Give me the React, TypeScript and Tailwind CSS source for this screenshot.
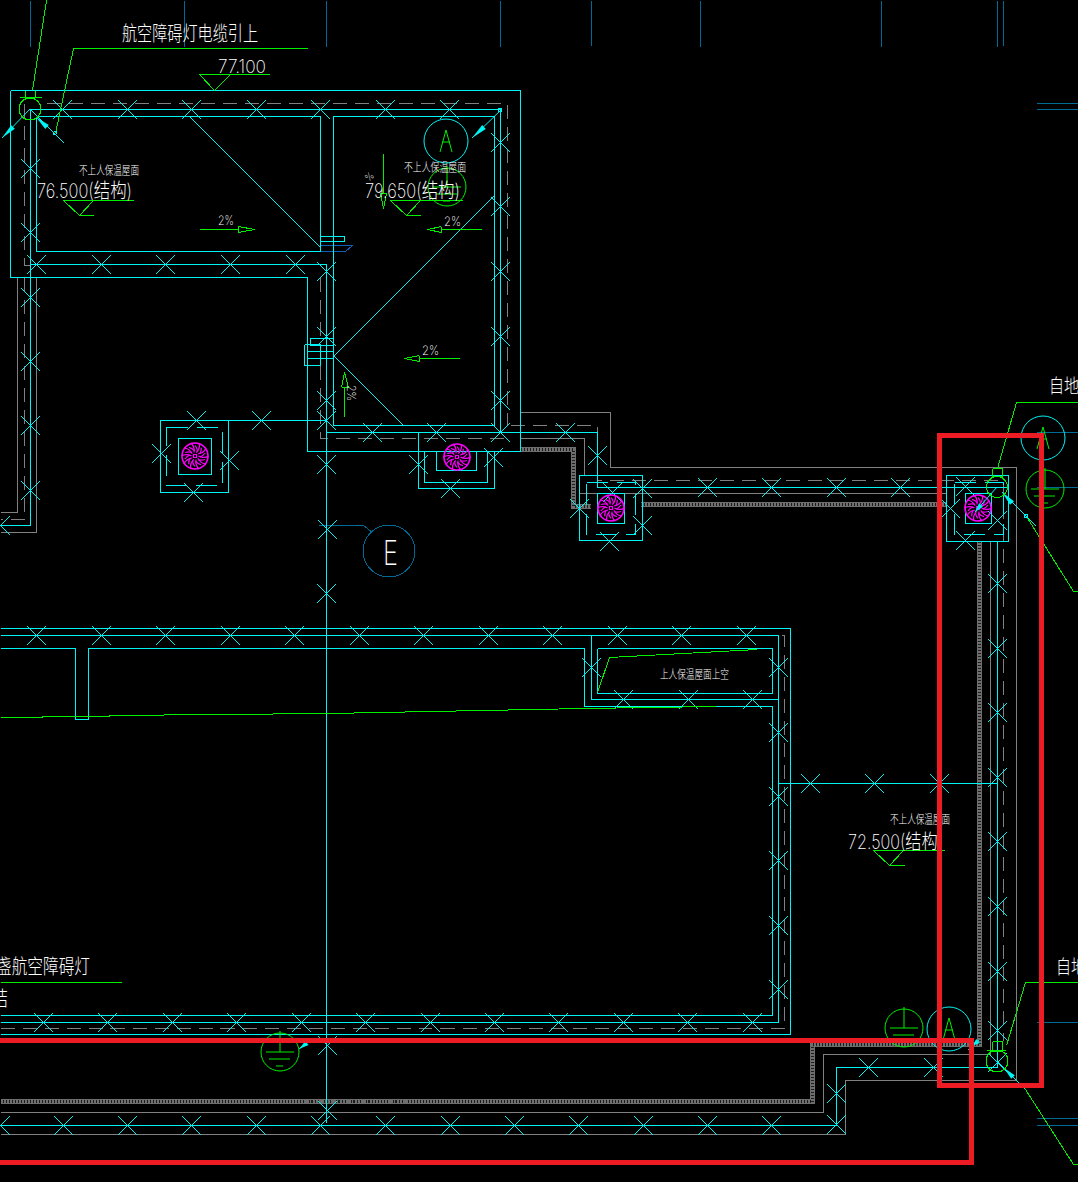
import React from 'react';

const CYAN = '#00f4f4';
const GRAY = '#808080';
const GREEN = '#00f000';
const BLUE = '#006a96';
const MAGENTA = '#ff00ff';

const crossesAt = [
  // top parapet
  [62, 109], [127, 109], [191, 109], [256, 109], [320, 109], [385, 109], [449, 109],
  // left wall
  [30, 168], [30, 232], [30, 297], [30, 361], [30, 425], [30, 490], [0, 525],
  // lower parapet of the left room
  [36, 264], [101, 264], [165, 264], [230, 264], [295, 264], [326, 271],
  // right wall of the upper room
  [500, 142], [500, 206], [500, 271], [500, 336], [500, 400], [500, 432],
  // axis
  [326, 336], [326, 400], [326, 420], [326, 464], [327, 529], [326, 593],
  [372, 432], [436, 432], [565, 432], [597, 455],
  // fans
  [196, 420], [261, 420], [161, 453], [229, 460], [193, 492],
  [418, 464], [493, 457], [450, 488],
  [579, 508], [642, 525], [642, 488], [609, 541], [612, 492],
  [965, 486], [950, 508], [997, 520], [965, 540],
  // run towards the right fan
  [707, 487], [771, 487], [836, 487], [900, 487],
  // right wall
  [997, 583], [997, 648], [997, 712], [997, 777], [997, 841], [997, 906], [997, 971], [997, 1030], [997, 1062],
  // top of the lower roof
  [36, 635], [101, 635], [165, 635], [230, 635], [294, 635], [359, 635], [423, 635], [488, 635], [552, 635], [617, 635], [681, 635], [746, 635],
  [591, 667], [623, 699], [688, 699], [752, 699],
  [778, 667], [778, 732], [778, 796], [778, 860], [778, 925], [778, 989],
  // bottom of the lower roof
  [43, 1022], [107, 1022], [172, 1022], [236, 1022], [301, 1022], [365, 1022], [430, 1022], [494, 1022], [558, 1022], [623, 1022], [687, 1022], [752, 1022],
  [327, 1045], [327, 1110],
  // outer bottom run
  [0, 1125], [63, 1125], [127, 1125], [191, 1125], [256, 1125], [320, 1125], [385, 1125], [450, 1125], [514, 1125], [578, 1125], [643, 1125], [707, 1125], [771, 1125],
  [836, 1124], [836, 1093], [868, 1067], [933, 1067],
  // section line
  [810, 783], [874, 783], [939, 783],
];

const cyanLines = [
  '10,90 520,90 520,451 307,451 307,277 10,277 10,90',
  '30,525 30,109 500,109 500,432',
  '36,116 320,116 320,251 36,251 36,116',
  '333,425 333,116 494,116 494,425 333,425',
  '30,264 326,264 326,1122',
  '0,525 30,525',
  '228,420 326,420',
  '326,432 597,432 597,487 1008,487',
  '0,628 790,628 790,1034 0,1034',
  '0,635 778,635 778,1022 0,1022',
  '0,648 75,648 75,719 88,719 88,648 584,648 584,706 772,706 772,1015 0,1015',
  '591,635 591,699 778,699',
  '597,648 772,648 772,693 597,693 597,648',
  '778,783 997,783',
  '0,1125 836,1125 836,1067 997,1067',
  '997,541 997,1067',
  '320,236 344,236 344,241 320,241',
  '304,344 320,344 320,365 304,365 304,344',
  '310,345 310,338 333,338',
  '310,345 333,345',
  '307,351 333,351',
  '307,358 333,358',
  // diagonals
  '189,116 320,247',
  '333,356 494,195',
  '334,356 403,425',
];

const grayLines = [
  '17,277 17,512 0,512',
  '36,277 36,532 0,532',
  '520,412 610,412 610,467 1016,467 1016,1080 845,1080 845,1134 0,1134',
  '520,438 584,438 584,475',
  '642,493 946,493',
  '990,541 990,1054 823,1054 823,1112 0,1112',
  '579,493 642,493',
];

const dashedLines = [
  '46,103 507,103 507,425',
  '24,103 24,265 30,265',
  '24,277 24,519 0,519',
  '320,277 320,438 510,438',
  '510,425 597,425 597,480 1003,480 1003,1040',
  '0,1028 784,1028 784,635 772,635',
];

const hatchLines = [
  '520,449 573,449 573,506 590,506',
  '640,504 946,504',
  '979,541 979,1044 812,1044 812,1101 0,1101',
];

const greenLines = [
  '46,0 32,90',
  '307,48 73,48 55,133',
  '19,97 41,97',
  '25,90 25,97',
  '35,90 35,97',
  // levels
  '269,74 199,74 214,90 230,74',
  '133,200 63,200 79,215 93,215',
  '79,215 93,200',
  '462,200 390,200 406,215 420,215',
  '406,215 420,200',
  '944,850 873,850 889,865 904,865',
  '889,865 903,850',
  // slope arrows
  '199,229 238,229',
  '238,226 254,229 238,232 238,226',
  '441,229 481,229',
  '441,226 427,229 441,232 441,226',
  '419,358 459,358',
  '419,355 404,358 419,361 419,355',
  '344,416 344,387',
  '341,387 344,372 348,387 341,387',
  '383,153 383,193',
  '380,193 383,208 386,193 380,193',
  // leaders
  '1078,402 1016,402 997,468',
  '1026,516 1073,591 1078,591',
  '1078,982 1025,982 1006,1045',
  '1025,1089 1073,1164 1078,1164',
  // small boxes on the corner risers
  '992,468 1002,468 1002,476 992,476 992,468',
  '992,1041 1002,1041 1002,1051 992,1051 992,1041',
  '986,1050 1005,1050',
  // lower roof
  '597,692 609,657 757,649',
  '0,717 42,717 42,716 109,716 109,715 328,713 584,708 716,706',
  '0,982 121,982',
];

const blueLines = [
  '30,0 30,46', '184,0 184,46', '326,0 326,46', '500,0 500,46', '591,0 591,45', '700,0 700,46', '881,0 881,46', '997,0 997,46', '1003,0 1003,45',
  '1036,103 1078,103', '1036,109 1078,109', '1036,432 1078,432', '1036,487 1078,487',
  '1036,1022 1078,1022', '1036,1118 1078,1118', '1036,1125 1078,1125',
  '318,525 363,525 372,532',
];

// thin leader with a wedge: narrow at a, widest at b
const leaders = [
  { from: [2, 138], to: [30, 109], a: [2, 138], b: [13, 127] },
  { from: [30, 109], to: [64, 143], a: [36, 117], b: [47, 127] },
  { from: [472, 138], to: [501, 110], a: [472, 138], b: [484, 127] },
  { from: [997, 487], to: [975, 512], a: [975, 512], b: [981, 505] },
  { from: [1002, 492], to: [1036, 526], a: [1002, 492], b: [1012, 503] },
  { from: [997, 1061], to: [1025, 1089], a: [1004, 1068], b: [1013, 1077] },
  { from: [968, 1050], to: [979, 1040], a: [972, 1046], b: [978, 1041] },
  { from: [299, 1049], to: [307, 1043], a: [299, 1049], b: [307, 1043] },
];

const wedge = (a: number[], b: number[]) => {
  const dx = b[0] - a[0];
  const dy = b[1] - a[1];
  const len = Math.hypot(dx, dy);
  const nx = (-dy / len) * 2.6;
  const ny = (dx / len) * 2.6;
  return `${a[0]},${a[1]} ${b[0] + nx},${b[1] + ny} ${b[0] - nx},${b[1] - ny}`;
};

const Cross = ({ x, y }: { x: number; y: number }) => (
  <path d={`M${x - 9.5} ${y - 9.5}L${x + 9.5} ${y + 9.5}M${x - 9.5} ${y + 9.5}L${x + 9.5} ${y - 9.5}`} stroke={CYAN} />
);

const Fan = ({ x, y }: { x: number; y: number }) => (
  <g transform={`translate(${x} ${y})`} stroke={MAGENTA} fill="none" strokeWidth="1.2">
    <circle r="13" strokeWidth="1.6" />
    {[0, 36, 72, 108, 144, 180, 216, 252, 288, 324].map((a) => (
      <path key={a} transform={`rotate(${a})`} d="M3 -2Q9 -3 11 -8M5 1Q8 0 10 -3" />
    ))}
    <rect x="-1.5" y="-1.5" width="3" height="3" />
  </g>
);

const FanBox = ({ box, dash, inner }: { box: number[]; dash: number[]; inner: number[] }) => (
  <g fill="none" stroke={CYAN}>
    <rect x={box[0]} y={box[1]} width={box[2] - box[0]} height={box[3] - box[1]} />
    <rect x={dash[0]} y={dash[1]} width={dash[2] - dash[0]} height={dash[3] - dash[1]} strokeDasharray="21 9" />
    <rect x={inner[0]} y={inner[1]} width={inner[2] - inner[0]} height={inner[3] - inner[1]} />
  </g>
);

const Earth = ({ x, y }: { x: number; y: number }) => (
  <g fill="none" stroke={GREEN}>
    <circle cx={x} cy={y} r="19" />
    <path d={`M${x} ${y - 21}V${y}M${x - 14} ${y}H${x + 14}M${x - 11} ${y + 7}H${x + 10}M${x - 4} ${y + 14}H${x + 3}`} />
  </g>
);

const AxisA = ({ x, y }: { x: number; y: number }) => (
  <g fill="none">
    <circle cx={x} cy={y} r="22" stroke={CYAN} />
    <path d={`M${x} ${y - 11}L${x - 6} ${y + 11}M${x} ${y - 11}L${x + 6} ${y + 11}M${x - 4} ${y + 1}H${x + 4}`} stroke={GREEN} />
  </g>
);

const Label = ({ x, y, w, size, children }: { x: number; y: number; w: number; size: number; children: string }) => (
  <text
    x={x}
    y={y}
    fontSize={size}
    textLength={w}
    lengthAdjust="spacingAndGlyphs"
    className="fill-white font-['Inter','Noto_Sans_CJK_SC',sans-serif] font-extralight"
  >
    {children}
  </text>
);

export default function App() {
  return (
    <div className="relative w-[1078px] h-[1182px] overflow-hidden bg-black">
      <svg width="1078" height="1182" viewBox="0 0 1078 1182" className="block">
        <g transform="translate(0.5 0.5)" fill="none" shapeRendering="crispEdges">
          {grayLines.map((p) => <polyline key={p} points={p} stroke={GRAY} />)}
          {dashedLines.map((p) => <polyline key={p} points={p} stroke={GRAY} strokeDasharray="14 8" />)}
          {hatchLines.map((p) => (
            <g key={p}>
              <polyline points={p} stroke="#6e6e6e" strokeWidth="5" />
              <polyline points={p} stroke="#1c1c1c" strokeWidth="3" strokeDasharray="1 2" />
            </g>
          ))}
          {blueLines.map((p) => <polyline key={p} points={p} stroke={BLUE} />)}
          <path d="M320 245H352L345 251H320" stroke="#1060b8" />
          {cyanLines.map((p) => <polyline key={p} points={p} stroke={CYAN} />)}
          <rect x="498" y="108" width="3" height="3" stroke={CYAN} />
          <FanBox box={[160, 420, 228, 492]} dash={[166, 427, 222, 485]} inner={[178, 438, 211, 474]} />
          <path d="M418 432V488H494V451M424 451V482H487V451M436 451V470H476V451" stroke={CYAN} />
          <FanBox box={[579, 475, 642, 540]} dash={[586, 482, 635, 534]} inner={[597, 493, 624, 523]} />
          <FanBox box={[946, 475, 1008, 541]} dash={[954, 482, 1003, 534]} inner={[965, 493, 991, 523]} />
          {crossesAt.map(([x, y]) => <Cross key={`${x}-${y}`} x={x} y={y} />)}
          {greenLines.map((p) => <polyline key={p} points={p} stroke={GREEN} />)}
        </g>

        <Fan x={195} y={456} />
        <Fan x={457} y={457} />
        <Fan x={611} y={508} />
        <Fan x={978} y={508} />

        {leaders.map((l) => (
          <g key={l.from.join()}>
            <line x1={l.from[0]} y1={l.from[1]} x2={l.to[0]} y2={l.to[1]} stroke={CYAN} />
            <polygon points={wedge(l.a, l.b)} fill={CYAN} />
          </g>
        ))}

        <g fill="none" shapeRendering="crispEdges">
          <circle cx="30" cy="109" r="11" stroke={GREEN} />
          <circle cx="997" cy="487" r="10.5" stroke={GREEN} />
          <circle cx="997" cy="1061" r="11" stroke={GREEN} />
          <circle cx="55" cy="133" r="1.5" stroke={CYAN} />
          <circle cx="1026" cy="516" r="1.5" stroke={CYAN} />
          <circle cx="389" cy="551" r="26" stroke={BLUE} />
        </g>

        <AxisA x={446} y={141} />
        <AxisA x={1043} y={438} />
        <AxisA x={949} y={1029} />
        <Earth x={447} y={187} />
        <Earth x={1045} y={489} />
        <Earth x={904} y={1028} />
        <Earth x={280} y={1052} />

        <Label x={122} y={41} w={136} size={20}>航空障碍灯电缆引上</Label>
        <Label x={218} y={73} w={48} size={18}>77.100</Label>
        <Label x={79} y={175} w={60} size={12}>不上人保温屋面</Label>
        <Label x={37} y={198} w={95} size={20}>76.500(结构)</Label>
        <Label x={404} y={172} w={62} size={12}>不上人保温屋面</Label>
        <Label x={365} y={198} w={95} size={20}>79.650(结构)</Label>
        <Label x={218} y={225} w={16} size={13}>2%</Label>
        <Label x={444} y={226} w={17} size={13}>2%</Label>
        <Label x={422} y={355} w={17} size={13}>2%</Label>
        <g transform="translate(347 385) rotate(90)">
          <Label x={0} y={0} w={16} size={12}>2%</Label>
        </g>
        <g transform="translate(369 182) rotate(-45)">
          <Label x={0} y={0} w={8} size={10}>%</Label>
        </g>
        <Label x={383} y={565} w={15} size={34}>E</Label>
        <Label x={660} y={679} w={69} size={12}>上人保温屋面上空</Label>
        <Label x={890} y={824} w={60} size={12}>不上人保温屋面</Label>
        <Label x={848} y={849} w={95} size={20}>72.500(结构)</Label>
        <Label x={-4} y={974} w={94} size={20}>盏航空障碍灯</Label>
        <Label x={-9} y={1006} w={17} size={20}>结</Label>
        <Label x={1049} y={393} w={30} size={19}>自地</Label>
        <Label x={1056} y={974} w={30} size={19}>自地</Label>
      </svg>

      {/* red review marks drawn over the drawing */}
      <div className="absolute left-[937px] top-[433px] w-[107px] h-[655px] border-[5px] border-[#ed1c24]" />
      <div className="absolute left-[-10px] top-[1038px] w-[984px] h-[127px] border-[5px] border-[#ed1c24]" />
    </div>
  );
}
